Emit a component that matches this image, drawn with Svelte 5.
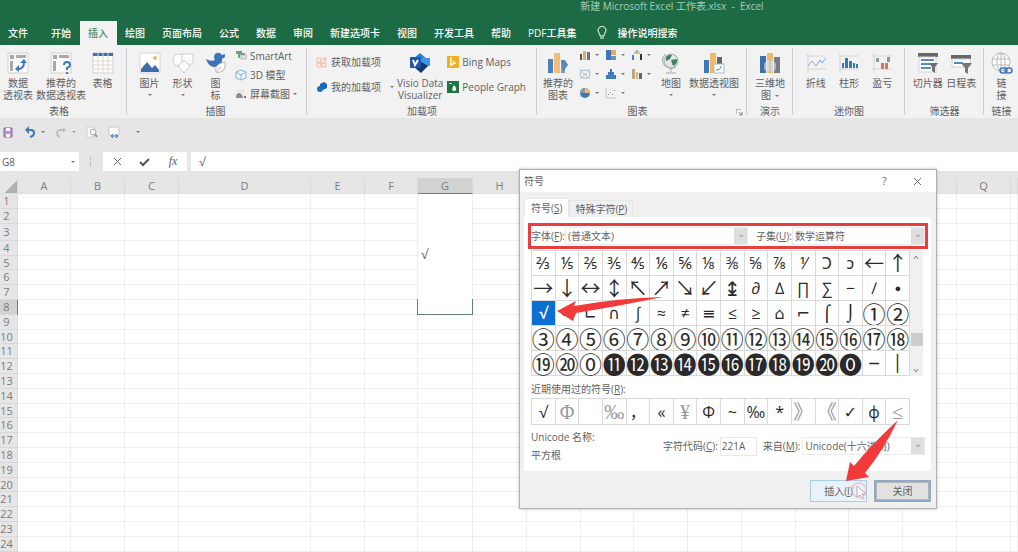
<script lang="ts">
  type Symbol = { char: string; kind?: string };

  const tabs = ['文件', '开始', '插入', '绘图', '页面布局', '公式', '数据', '审阅', '新建选项卡', '视图', '开发工具', '帮助', 'PDF工具集'];
  let activeTab = $state('插入');

  // Column letters with their widths, the last one takes what is left
  const columns = [
    { name: 'A', width: 53 }, { name: 'B', width: 54 }, { name: 'C', width: 54 },
    { name: 'D', width: 132 }, { name: 'E', width: 54 }, { name: 'F', width: 53 },
    { name: 'G', width: 55 }, { name: 'H', width: 54 }, { name: 'I', width: 54 },
    { name: 'J', width: 53 }, { name: 'K', width: 54 }, { name: 'L', width: 54 },
    { name: 'M', width: 54 }, { name: 'N', width: 53 }, { name: 'O', width: 54 },
    { name: 'P', width: 54 }, { name: 'Q', width: 54 }, { name: '', width: 0 },
  ];
  const rows = Array.from({ length: 24 }, (_, i) => i + 1);
  const mergedRows = 8; // G1:G8 is one merged cell

  const symbols: Symbol[] = [
    ...'⅔⅕⅖⅗⅘⅙⅚⅛⅜⅝⅞⅟Ↄↄ'.split('').map((char) => ({ char })),
    ...'←↑→↓↔↕↖↗↘↙↨'.split('').map((char) => ({ char, kind: 'arrow' })),
    ...'∂∆∏∑−∕∙'.split('').map((char) => ({ char })),
    ...'√∞∟∩∫≈≠≡≤≥⌂⌐⌠⌡'.split('').map((char) => ({ char })),
    ...'①②③④⑤⑥⑦⑧⑨⑩⑪⑫⑬⑭⑮⑯⑰⑱⑲⑳⓪⓫⓬⓭⓮⓯⓰⓱⓲⓳⓴⓿'.split('').map((char) => ({ char, kind: 'circled' })),
    { char: '─' },
    { char: '│' },
  ];
  let selected = $state('√');

  const recent: Symbol[] = [
    { char: '√' }, { char: 'Φ', kind: 'serif' }, { char: ' ' }, { char: '‰', kind: 'serif' },
    { char: '，' }, { char: '«' }, { char: '¥', kind: 'serif' }, { char: 'Φ' },
    { char: '~' }, { char: '‰' }, { char: '*' }, { char: '》', kind: 'serif' },
    { char: '《', kind: 'serif' }, { char: '✓' }, { char: 'ф' }, { char: '≤', kind: 'serif' },
  ];

  const smallCharts = ['column', 'tree', 'waterfall', 'radar', 'histogram', 'combo', 'pie', 'scatter'];
</script>

{#snippet icon(name: string)}
  {#if name === 'pivot' || name === 'pivotHelp'}
    <svg class="icon" viewBox="0 0 22 22">
      <rect x="1" y="1" width="20" height="20" fill="#fafafa" stroke="#d2d2d2" />
      <path d="M3 3h4v4H3zM9 3h10v3H9zM3 9h3v10H3z" fill="#a8a8a8" />
      {#if name === 'pivot'}
        <path d="M11 17q6 0 6-7" fill="none" stroke="#3d78bd" stroke-width="2" />
        <path d="M8 17l4-4v7zM17 7l-4 4h7z" fill="#3d78bd" />
      {:else}
        <path d="M14 13q0-3 3-3t3 3q0 2-3 3v2" fill="none" stroke="#3d78bd" stroke-width="2" />
        <rect x="16" y="20" width="2" height="2" fill="#3d78bd" />
      {/if}
    </svg>
  {:else if name === 'table'}
    <svg class="icon" viewBox="0 0 22 22">
      <rect x="1" y="1" width="20" height="20" fill="#fff" stroke="#d0d0d0" />
      <rect x="1" y="1" width="20" height="3" fill="#3b6fb0" />
      <path d="M6 1v20M11 1v20M16 1v20M1 9h20M1 13h20M1 17h20" stroke="#e3d6cd" />
    </svg>
  {:else if name === 'picture'}
    <svg class="icon" viewBox="0 0 22 22">
      <rect x="1" y="1" width="20" height="20" fill="#fff" stroke="#d6d6d6" />
      <circle cx="16" cy="6" r="2" fill="#efb75b" />
      <path d="M2 20v-3l6-7 5 6 3-3 4 5v2z" fill="#3d6eab" />
    </svg>
  {:else if name === 'shapes'}
    <svg class="icon" viewBox="0 0 22 22" fill="#fff" stroke="#c8ccd3">
      <circle cx="7" cy="8" r="6" />
      <rect x="10" y="2" width="11" height="10" />
      <path d="M12 8l6 6-6 7-6-7z" />
    </svg>
  {:else if name === 'duck'}
    <svg class="icon" viewBox="0 0 22 22">
      <path d="M1 7q5 3 9 1-2-3 0-6 4-3 7 1l3-1v3l-3 2q1 8-8 8Q3 14 1 7z" fill="#3b75b5" />
      <path d="M11 20q-2-8 9-10 1 9-5 10-3 1-4 0l5-5" fill="#fff" stroke="#b9b4ae" />
    </svg>
  {:else if name === 'smartart'}
    <svg class="icon mini" viewBox="0 0 12 12">
      <path d="M1 1h6v2h3v2H5v3H3V4H1z" fill="#6fa08a" />
      <rect x="6" y="5" width="5" height="4" fill="#dfe5e2" stroke="#b5b5b5" />
    </svg>
  {:else if name === 'cube'}
    <svg class="icon mini" viewBox="0 0 12 12" fill="#eef5fc" stroke="#83b2e0">
      <path d="M6 1l5 2v6l-5 2-5-2V3zM1 3l5 3 5-3M6 6v5" />
    </svg>
  {:else if name === 'screenshot'}
    <svg class="icon mini" viewBox="0 0 12 12">
      <path d="M1 10q0-5 3-5t4 5z" fill="#8c8c8c" />
      <path d="M1 3h8v2" fill="none" stroke="#ddd" />
      <rect x="9" y="8" width="2" height="2" fill="#777" />
    </svg>
  {:else if name === 'store'}
    <svg class="icon mini" viewBox="0 0 12 12" fill="#fdf1ec" stroke="#efb7a3">
      <path d="M1 2h4v4H1zM1 7h4v4H1zM6 7h4v4H6zM9 1v5M6 3h5" />
    </svg>
  {:else if name === 'myaddin'}
    <svg class="icon mini" viewBox="0 0 12 12">
      <path d="M4 3l4-2 3 2v4L7 9 4 7z" fill="#1668b9" />
      <circle cx="4" cy="8" r="3" fill="#1d70c0" />
    </svg>
  {:else if name === 'visio'}
    <svg class="icon" viewBox="0 0 22 22">
      <path d="M11 1l7 6-7 6-7-6z" fill="#2a82d8" />
      <path d="M12 6h9v8h-9z" fill="#3f97e8" />
      <path d="M11 9l8 5-7 7-7-6z" fill="#16366f" />
      <rect x="1" y="5" width="11" height="11" rx="1" fill="#1d56ad" />
      <path d="M4 8l2 5 3-5" fill="none" stroke="#fff" stroke-width="2" />
    </svg>
  {:else if name === 'bing'}
    <svg class="icon mini" viewBox="0 0 12 12">
      <rect width="12" height="12" fill="#f2b01c" />
      <path d="M4 1v8l4-2-2-2" fill="none" stroke="#fff" stroke-width="1.5" />
    </svg>
  {:else if name === 'people'}
    <svg class="icon mini" viewBox="0 0 12 12">
      <rect width="12" height="12" fill="#1f7349" />
      <path d="M6 10q-2-2 1-6 4 4 1 6zM2 2h3v1H2z" fill="#e8f3ed" />
    </svg>
  {:else if name === 'recommended'}
    <svg class="icon" viewBox="0 0 22 22">
      <rect x="1" y="7" width="5" height="14" fill="#4d82bd" />
      <rect x="7" y="1" width="6" height="20" fill="#efbf78" />
      <rect x="14" y="9" width="4" height="12" fill="#8d9bad" />
      <path d="M14 8h4l3 5-5 7z" fill="#5989bd" />
    </svg>
  {:else if name === 'column'}
    <svg class="icon mini" viewBox="0 0 12 12">
      <path d="M1 5h2v6H1z" fill="#555" /><path d="M4 2h3v9H4z" fill="#e0ac62" /><path d="M8 3h3v8H8z" fill="#77716a" />
    </svg>
  {:else if name === 'tree'}
    <svg class="icon mini" viewBox="0 0 12 12">
      <path d="M1 1h5v10H1z" fill="#3a76b8" /><path d="M6 1h5v5H6z" fill="#e5ac5d" /><path d="M6 7h5v4H6z" fill="#6d93bd" />
    </svg>
  {:else if name === 'waterfall'}
    <svg class="icon mini" viewBox="0 0 12 12">
      <path d="M1 6h2v5H1z" fill="#4d82bd" /><path d="M3 5l3-4 3 4" fill="none" stroke="#999" /><path d="M5 2h2v3H5z" fill="#e5ac5d" /><path d="M9 5h2v6H9z" fill="#333" />
    </svg>
  {:else if name === 'radar'}
    <svg class="icon mini" viewBox="0 0 12 12" fill="none" stroke="#9db4ce">
      <path d="M2 3l4-1 4 1 1 4-3 3H4L1 7zM1 1l2 2M11 1L9 3M1 11l2-2M11 11L9 9M4 5l4 3M8 5L4 8" />
    </svg>
  {:else if name === 'histogram'}
    <svg class="icon mini" viewBox="0 0 12 12">
      <path d="M1 7h2V4h2V1h2v3h2v3h2v4H1z" fill="#4279b7" />
    </svg>
  {:else if name === 'combo'}
    <svg class="icon mini" viewBox="0 0 12 12">
      <path d="M1 1h3v10H1z" fill="#b6a58b" /><path d="M5 4h2v7H5z" fill="#e3b06b" /><path d="M8 5h3v6H8z" fill="#6d665f" />
    </svg>
  {:else if name === 'pie'}
    <svg class="icon mini" viewBox="0 0 12 12">
      <circle cx="6" cy="6" r="5" fill="#3d78b9" /><path d="M6 6V1a5 5 0 0 0-5 5z" fill="#8b99a9" /><path d="M6 6V1a5 5 0 0 1 5 5z" fill="#edbd6c" />
    </svg>
  {:else if name === 'scatter'}
    <svg class="icon mini" viewBox="0 0 12 12">
      <path d="M1 1v10h10" fill="none" stroke="#c4c4c4" /><path d="M3 7h1v1H3zM5 5h1v1H5zM7 7h1v1H7zM9 3h1v1H9z" fill="#888" />
    </svg>
  {:else if name === 'globe'}
    <svg class="icon" viewBox="0 0 22 22">
      <circle cx="11" cy="9" r="7" fill="#dfe8e4" stroke="#9eaaa5" />
      <path d="M6 5q3-3 6-2l-2 4-4 2zM11 8l6-1q1 5-4 7z" fill="#3d8062" />
      <path d="M5 2Q0 9 5 14q6 4 11 1M11 17v3M6 21h10" fill="none" stroke="#a5a5a5" />
    </svg>
  {:else if name === 'pivotChart'}
    <svg class="icon" viewBox="0 0 22 22">
      <rect x="1" y="8" width="5" height="13" fill="#3d78b9" />
      <rect x="7" y="1" width="6" height="20" fill="#efb968" />
      <rect x="14" y="5" width="5" height="9" fill="#666" />
      <rect x="11" y="12" width="10" height="9" fill="#fff" stroke="#b0b8c2" />
      <path d="M13 18q5 0 5-4" fill="none" stroke="#4d82bd" />
    </svg>
  {:else if name === 'map3d'}
    <svg class="icon" viewBox="0 0 22 22">
      <rect x="1" y="4" width="6" height="17" fill="#3a71b0" />
      <rect x="8" y="1" width="6" height="20" fill="#edb968" />
      <rect x="15" y="5" width="6" height="16" fill="#777d84" />
      <circle cx="11" cy="14" r="6" fill="#dfe5ee" opacity="0.7" />
      <path d="M6 11v8M11 8v12M16 11v8" stroke="#a8b3c2" />
    </svg>
  {:else if name === 'line'}
    <svg class="icon" viewBox="0 0 22 22">
      <path d="M3 1v20M1 4h20M1 17h20" stroke="#d5d5d5" /><path d="M3 14l4-5 4 5 4-6 2 3 4-5" fill="none" stroke="#86a9cf" />
    </svg>
  {:else if name === 'bars'}
    <svg class="icon" viewBox="0 0 22 22">
      <path d="M2 2v19M1 4h20M1 17h20" stroke="#d5d5d5" /><path d="M4 11h2v5H4zM7 6h3v10H7zM11 9h3v7h-3zM15 11h2v5h-2zM18 12h2v4h-2z" fill="#3a76b4" />
    </svg>
  {:else if name === 'winloss'}
    <svg class="icon" viewBox="0 0 22 22">
      <path d="M3 1v20M1 4h20M1 17h20" stroke="#d5d5d5" /><path d="M5 6h3v4H5zM16 5h3v5h-3z" fill="#8b9a96" /><path d="M10 11h3v6h-3zM14 11h3v6h-3z" fill="#dd7264" />
    </svg>
  {:else if name === 'slicer'}
    <svg class="icon" viewBox="0 0 22 22">
      <rect x="1" y="1" width="20" height="4" fill="#666" />
      <rect x="2" y="5" width="17" height="15" fill="#fff" stroke="#cdd5df" />
      <path d="M4 8h13M4 12h10M4 16h10" stroke="#5b8ac2" stroke-width="2" />
      <path d="M12 11h9l-3 4v6l-3-2v-4z" fill="#707070" />
    </svg>
  {:else if name === 'timeline'}
    <svg class="icon" viewBox="0 0 22 22">
      <rect x="1" y="3" width="20" height="4" fill="#666" />
      <rect x="2" y="7" width="18" height="8" fill="#fff" stroke="#d0d0d0" />
      <path d="M4 11h9" stroke="#4d8ac2" stroke-width="2" />
      <path d="M11 11h11l-4 5v6l-3-2v-4z" fill="#777" />
    </svg>
  {:else if name === 'link'}
    <svg class="icon" viewBox="0 0 22 22" fill="none">
      <g stroke="#b9b9b9"><circle cx="10" cy="10" r="9" fill="#fff" /><ellipse cx="10" cy="10" rx="4" ry="9" /><path d="M1 7h18M1 13h18M10 1v18" /></g>
      <g stroke="#3f79b7" stroke-width="1.5"><rect x="9" y="16" width="7" height="5" rx="2.5" /><rect x="14" y="16" width="7" height="5" rx="2.5" /></g>
    </svg>
  {/if}
{/snippet}

{#snippet bigButton(name: string, lines: string[], caret: boolean = false)}
  <button class="big">
    {@render icon(name)}
    {#each lines as line, i}
      <span>{line}{#if caret && i > 0}<i class="caret inline"></i>{/if}</span>
    {/each}
    {#if caret && lines.length === 1}<i class="caret"></i>{/if}
  </button>
{/snippet}

<div class="app">
  <header>
    <div class="title">新建 Microsoft Excel 工作表.xlsx &nbsp;-&nbsp; Excel</div>
    <nav>
      {#each tabs as tab}
        <button class:active={tab === activeTab} onclick={() => (activeTab = tab)}>{tab}</button>
      {/each}
      <button class="tell">
        <svg width="10" height="14" viewBox="0 0 10 14" fill="none" stroke="#fff">
          <path d="M3 10Q3 8 2 7a4 4 0 1 1 6 0Q7 8 7 10zM3 12h4" />
        </svg>
        操作说明搜索
      </button>
    </nav>
  </header>

  <div class="ribbon">
    <section class="g-tables">
      <div class="tools">
        {@render bigButton('pivot', ['数据', '透视表'])}
        {@render bigButton('pivotHelp', ['推荐的', '数据透视表'])}
        {@render bigButton('table', ['表格'])}
      </div>
      <h2>表格</h2>
    </section>
    <section class="g-illustrations">
      <div class="tools">
        {@render bigButton('picture', ['图片'], true)}
        {@render bigButton('shapes', ['形状'], true)}
        {@render bigButton('duck', ['图', '标'])}
        <div class="list three">
          <button>{@render icon('smartart')}SmartArt</button>
          <button>{@render icon('cube')}3D 模型</button>
          <button>{@render icon('screenshot')}屏幕截图<i class="caret"></i></button>
        </div>
      </div>
      <h2>插图</h2>
    </section>
    <section class="g-addins">
      <div class="tools">
        <div class="list">
          <button>{@render icon('store')}获取加载项</button>
          <button>{@render icon('myaddin')}我的加载项<i class="caret far"></i></button>
        </div>
        {@render bigButton('visio', ['Visio Data', 'Visualizer'])}
        <div class="list">
          <button>{@render icon('bing')}Bing Maps</button>
          <button>{@render icon('people')}People Graph</button>
        </div>
      </div>
      <h2>加载项</h2>
    </section>
    <section class="g-charts">
      <div class="tools">
        {@render bigButton('recommended', ['推荐的', '图表'])}
        <div class="charts">
          {#each smallCharts as chart}
            <button aria-label={chart}>{@render icon(chart)}<i class="caret inline"></i></button>
          {/each}
        </div>
        {@render bigButton('globe', ['地图'], true)}
        {@render bigButton('pivotChart', ['数据透视图'], true)}
      </div>
      <h2>图表</h2>
      <svg class="launcher" width="7" height="7" viewBox="0 0 7 7" fill="none" stroke="#888"><path d="M0 5V0h5M3 3l3 3M6 3v3H3" /></svg>
    </section>
    <section class="g-tour">
      <div class="tools">{@render bigButton('map3d', ['三维地', '图'], true)}</div>
      <h2>演示</h2>
    </section>
    <section class="g-spark">
      <div class="tools">
        {@render bigButton('line', ['折线'])}
        {@render bigButton('bars', ['柱形'])}
        {@render bigButton('winloss', ['盈亏'])}
      </div>
      <h2>迷你图</h2>
    </section>
    <section class="g-filter">
      <div class="tools">
        {@render bigButton('slicer', ['切片器'])}
        {@render bigButton('timeline', ['日程表'])}
      </div>
      <h2>筛选器</h2>
    </section>
    <section class="g-link">
      <div class="tools">{@render bigButton('link', ['链', '接'])}</div>
      <h2>链接</h2>
    </section>
  </div>

  <div class="quick">
    <button aria-label="保存">
      <svg width="12" height="12" viewBox="0 0 12 12"><path d="M2 2h8v9H2z" fill="#b797cb" stroke="#8f62ab" /><path d="M4 2h4v3H4zM4 8h4v3H4z" fill="#fff" /></svg>
    </button>
    <button aria-label="撤消">
      <svg width="12" height="12" viewBox="0 0 12 12"><path d="M3 4h4q3 0 3 3t-4 4" fill="none" stroke="#3f78b5" stroke-width="2" /><path d="M1 4l4-4v8z" fill="#3f78b5" /></svg>
      <i class="caret"></i>
    </button>
    <button class="off" aria-label="恢复">
      <svg width="12" height="12" viewBox="0 0 12 12"><path d="M9 4H6Q2 4 2 7t3 4" fill="none" stroke="#b0b0b0" stroke-width="2" /><path d="M11 4L8 1v6z" fill="#b0b0b0" /></svg>
      <i class="caret"></i>
    </button>
    <button aria-label="打印预览">
      <svg width="12" height="12" viewBox="0 0 12 12" fill="none"><path d="M1 1h7v10H1z" fill="#fff" stroke="#ccc" /><circle cx="7" cy="6" r="3" fill="#f4f4f4" stroke="#aaa" /><path d="M9 8l2 3" stroke="#999" stroke-width="2" /></svg>
    </button>
    <button aria-label="列宽">
      <svg width="12" height="12" viewBox="0 0 12 12"><path d="M1 1h10v8H1z" fill="#fff" stroke="#c8c8c8" /><path d="M3 10h7M5 8l-2 2 2 2M8 8l2 2-2 2" fill="none" stroke="#3d75b3" /></svg>
    </button>
    <button aria-label="自定义"><i class="caret"></i></button>
  </div>

  <div class="formula">
    <div class="name">
      <input aria-label="名称框" value="G8" />
      <i class="caret"></i>
    </div>
    <span class="grip"></span>
    <div class="edit">
      <button aria-label="取消"><svg width="9" height="9" viewBox="0 0 9 9"><path d="M1 1l7 7M8 1L1 8" stroke="#666" /></svg></button>
      <button aria-label="输入"><svg width="12" height="10" viewBox="0 0 12 10"><path d="M1 5l3 3 6-6" fill="none" stroke="#555" stroke-width="2" /></svg></button>
      <button class="fx">fx</button>
    </div>
    <input class="value" aria-label="编辑栏" value="√" />
  </div>

  <div class="sheet">
    <table>
      <colgroup>
        <col class="numbers" />
        {#each columns as column}
          <col style:width={column.width ? `${column.width}px` : 'auto'} />
        {/each}
      </colgroup>
      <thead>
        <tr>
          <th class="corner"></th>
          {#each columns as column}
            <th class:current={column.name === 'G'}>{column.name}</th>
          {/each}
        </tr>
      </thead>
      <tbody>
        {#each rows as row}
          <tr class:tall={row === 3}>
            <th class:current={row === 8}>{row}</th>
            {#each columns as column}
              {#if column.name !== 'G' || row > mergedRows}
                <td></td>
              {:else if row === 1}
                <td class="merged" rowspan={mergedRows}>√</td>
              {/if}
            {/each}
          </tr>
        {/each}
      </tbody>
    </table>
  </div>

  <div class="dialog" role="dialog" aria-labelledby="dialog-title">
    <div class="caption">
      <h1 id="dialog-title">符号</h1>
      <button>?</button>
      <button aria-label="关闭窗口"><svg width="9" height="9" viewBox="0 0 9 9"><path d="M1 1l7 7M8 1L1 8" stroke="#666" /></svg></button>
    </div>
    <div class="tabs" role="tablist">
      <button class="on" role="tab" aria-selected="true">符号(<u>S</u>)</button>
      <button role="tab" aria-selected="false">特殊字符(<u>P</u>)</button>
    </div>
    <div class="panel">
      <div class="marked">
        <label for="font">字体(<u>F</u>):</label>
        <div class="select wide">
          <select id="font"><option>(普通文本)</option></select>
        </div>
        <label for="subset">子集(<u>U</u>):</label>
        <div class="select">
          <select id="subset"><option>数学运算符</option></select>
        </div>
      </div>

      <div class="picker">
        <div class="symbols">
          {#each symbols as symbol}
            <button class={symbol.kind} class:selected={symbol.char === selected} onclick={() => (selected = symbol.char)}>{symbol.char}</button>
          {/each}
        </div>
        <div class="scroll">
          <svg width="7" height="5" viewBox="0 0 7 5"><path d="M1 4l2-3 2 3" fill="none" stroke="#888" /></svg>
          <span></span>
          <svg width="7" height="5" viewBox="0 0 7 5"><path d="M1 1l2 3 2-3" fill="none" stroke="#888" /></svg>
        </div>
      </div>

      <p class="recent-label">近期使用过的符号(<u>R</u>):</p>
      <div class="symbols recent">
        {#each recent as symbol}
          <button class={symbol.kind}>{symbol.char}</button>
        {/each}
      </div>

      <div class="details">
        <div class="unicode">
          <p>Unicode 名称:</p>
          <p>平方根</p>
        </div>
        <label for="code">字符代码(<u>C</u>):</label>
        <input id="code" value="221A" />
        <label for="from">来自(<u>M</u>):</label>
        <div class="select">
          <select id="from"><option>Unicode(十六进制)</option></select>
        </div>
      </div>
    </div>
    <div class="actions">
      <button class="insert">插入(<u>I</u>)</button>
      <button class="close">关闭</button>
    </div>

    <svg class="arrows" width="418" height="340" viewBox="0 0 418 340">
      <path d="M38 142L57 132L55 137Q100 129 144 128Q100 137 57 144L54 152z" fill="#f23a3a" />
      <path d="M379 251Q364 282 346 304L350 308L327 312L331 293L335 297Q352 276 379 251z" fill="#f23a3a" />
      <circle cx="340" cy="321" r="7" fill="none" stroke="#e7a9b5" stroke-width="2" opacity="0.5" />
      <path d="M338 317v11l3-2 2 4 2-1-2-4h4z" fill="#fff" stroke="#c2a4b4" />
    </svg>
  </div>
</div>

<style>
  :global(body) {
    margin: 0;
    background: #fff;
  }

  .app {
    position: relative;
    display: flex;
    flex-direction: column;
    height: 100vh;
    overflow: hidden;
    font-family: "Open Sans", "Noto Sans CJK SC", sans-serif;
    font-size: 10px;
    line-height: 12px;
    color: #5f5f5f;
  }

  button, input, select {
    box-sizing: border-box;
    margin: 0;
    padding: 0;
    border: 0;
    background: none;
    font: inherit;
    color: inherit;
  }

  h1, h2, p {
    margin: 0;
    font-size: 10px;
    font-weight: 400;
  }

  svg {
    flex: none;
    display: block;
  }

  /* Title and ribbon tabs */
  header {
    background: #1d6b45;
    color: #fff;
  }

  .title {
    height: 21px;
    margin-left: 57%;
    white-space: nowrap;
    color: #a9ccb9;
  }

  nav {
    display: flex;
    height: 24px;
  }

  nav button {
    padding: 0 9px 0 8px;
    font-weight: 500;
    white-space: nowrap;
  }

  nav button:first-child {
    margin-right: 6px;
  }

  nav .active {
    background: #f3f3f3;
    color: #4d8a6a;
  }

  nav .tell {
    display: flex;
    align-items: center;
    gap: 10px;
    margin-left: 4px;
  }

  /* Ribbon */
  .ribbon {
    display: flex;
    height: 73px;
    background: #f2f2f2;
  }

  section {
    position: relative;
    box-sizing: border-box;
    flex: none;
    display: flex;
    flex-direction: column;
    background: linear-gradient(#cfcfcf, #cfcfcf) right 3px / 1px 67px no-repeat;
  }

  section h2 {
    text-align: center;
  }

  .g-tables { width: 127px; }
  .g-illustrations { width: 180px; padding-left: 6px; }
  .g-addins { width: 230px; padding-left: 9px; }
  .g-charts { width: 210px; }
  .g-tour { width: 46px; }
  .g-spark { width: 112px; padding: 0 6px; }
  .g-filter { width: 79px; padding: 0 6px; }
  .g-link { flex: 1 0 35px; background: none; }

  .g-tables h2, .g-illustrations h2, .g-addins h2, .g-charts h2 {
    padding-right: 9px;
  }

  .tools {
    display: flex;
    height: 60px;
  }

  .g-spark .tools, .g-filter .tools, .g-tour .tools, .g-link .tools {
    justify-content: space-around;
  }

  .big {
    flex: none;
    display: flex;
    flex-direction: column;
    align-items: center;
    min-width: 33px;
    padding-top: 7px;
    white-space: nowrap;
  }

  .g-tables .big:first-child {
    width: 36px;
  }

  .big .icon {
    margin-bottom: 3px;
  }

  .icon {
    width: 22px;
    height: 22px;
  }

  .mini {
    width: 12px;
    height: 12px;
  }

  .caret {
    display: block;
    width: 0;
    border: 2px solid transparent;
    border-top-color: #777;
    border-bottom: 0;
  }

  .big > .caret {
    margin-top: 5px;
  }

  .caret.inline {
    display: inline-block;
    margin-left: 4px;
    vertical-align: middle;
  }

  .caret.far {
    margin-left: 6px;
  }

  .list {
    display: flex;
    flex-direction: column;
    padding-top: 4px;
  }

  .list button {
    display: flex;
    align-items: center;
    gap: 3px;
    height: 25px;
    white-space: nowrap;
  }

  .list.three {
    padding: 1px 0 0 3px;
  }

  .list.three button {
    height: 19px;
  }

  .g-addins .big {
    margin: 0 4px 0 3px;
  }

  .g-charts .big:first-child {
    width: 42px;
  }

  .g-charts .big:nth-child(3) {
    width: 28px;
    min-width: 0;
  }

  .g-charts .big:last-child {
    width: 58px;
  }

  .charts {
    display: grid;
    grid-template-columns: repeat(3, 26px);
    grid-auto-rows: 19px;
  }

  .charts button {
    display: flex;
    align-items: center;
  }

  .launcher {
    position: absolute;
    right: 4px;
    bottom: 2px;
  }

  /* Quick access bar */
  .quick {
    display: flex;
    align-items: center;
    gap: 10px;
    height: 22px;
    padding: 3px 2px 9px;
    background: #e6e6e6;
  }

  .quick button {
    display: flex;
    align-items: center;
    gap: 5px;
  }

  .quick button:nth-child(5) {
    margin-right: 6px;
  }

  .off {
    opacity: 0.7;
  }

  /* Formula bar */
  .formula {
    display: flex;
    height: 19px;
    padding-bottom: 7px;
    background: #e6e6e6;
  }

  .name {
    display: flex;
    align-items: center;
    width: 79px;
    background: #fff;
  }

  .name input {
    flex: 1;
    min-width: 0;
    padding-left: 2px;
  }

  .name .caret {
    margin-right: 4px;
  }

  .grip {
    width: 1px;
    height: 9px;
    margin: 5px 11px;
    border-left: 1px dotted #999;
  }

  .edit {
    display: flex;
    width: 84px;
    margin-right: 4px;
    background: #fff;
  }

  .edit button {
    flex: 1;
    display: flex;
    align-items: center;
    justify-content: center;
  }

  .edit .fx {
    font: italic 12px "Liberation Serif", serif;
  }

  .value {
    flex: 1;
    min-width: 0;
    padding-left: 8px;
    background: #fff;
    font-size: 12px;
  }

  /* Cells */
  .sheet {
    flex: 1;
    min-height: 0;
    overflow: hidden;
  }

  table {
    width: 100%;
    table-layout: fixed;
    border-collapse: separate;
    border-spacing: 0;
  }

  .numbers {
    width: 18px;
  }

  th, td {
    box-sizing: border-box;
    height: 15px;
    padding: 0;
    border-right: 1px solid #efefef;
    border-bottom: 1px solid #efefef;
    line-height: 12px;
  }

  th {
    background: #e6e6e6;
    border-color: #d9d9d9;
    font-size: 11px;
    font-weight: 400;
    color: #7c7c7c;
  }

  thead th {
    height: 16px;
    border-bottom-color: #e0e0e0;
  }

  tbody th {
    padding-right: 4px;
  }

  tbody tr:nth-child(5n) > *, tbody tr:first-child > th {
    height: 14px;
  }

  .tall > * {
    height: 17px;
  }

  .corner {
    background: linear-gradient(135deg, #e6e6e6 60%, #b0b0b0 60%);
  }

  .current {
    background: #d2d2d2;
  }

  thead .current {
    border-bottom-color: #5d8a76;
  }

  tbody .current {
    border-right-color: #5d8a76;
  }

  .merged {
    position: relative;
    padding-left: 3px;
    font-size: 13px;
  }

  .merged::after {
    content: "";
    position: absolute;
    inset: auto -1px -1px -1px;
    height: 15px;
    border: 1px solid #5f8274;
    border-top: 0;
  }

  /* Symbol dialog */
  .dialog {
    position: absolute;
    left: 519px;
    top: 169px;
    box-sizing: border-box;
    width: 418px;
    border: 1px solid #b2b2b2;
    background: #f0f0f0;
    box-shadow: 0 0 3px #bbb;
  }

  .caption {
    display: flex;
    align-items: center;
    height: 22px;
    padding: 0 4px;
    background: #fff;
  }

  .caption h1 {
    flex: 1;
  }

  .caption button {
    display: flex;
    justify-content: center;
    width: 37px;
  }

  .caption button:last-child {
    width: 29px;
  }

  .tabs {
    display: flex;
    align-items: flex-end;
    height: 25px;
    padding-left: 4px;
  }

  .tabs button {
    height: 17px;
    padding: 0 5px;
    border: 1px solid #e6e6e6;
    border-bottom: 0;
  }

  .tabs .on {
    height: 19px;
    padding: 0 6px;
    background: #fff;
  }

  .panel {
    margin: 0 5px 0 4px;
    padding: 6px 3px 10px 7px;
    background: #fff;
  }

  .marked {
    display: flex;
    align-items: center;
    height: 20px;
    margin-left: -3px;
    border: 3px solid #e83e3e;
  }

  .marked label {
    width: 34px;
    white-space: nowrap;
  }

  .marked label:nth-of-type(2) {
    margin-left: 8px;
    width: 36px;
  }

  .select {
    position: relative;
    box-sizing: border-box;
    flex: 1;
    height: 18px;
    border: 1px solid #ececec;
  }

  .select.wide {
    flex: none;
    width: 183px;
  }

  .select::after {
    content: "⌄";
    position: absolute;
    inset: 0 0 0 auto;
    width: 13px;
    background: #dedede;
    text-align: center;
    line-height: 11px;
    color: #999;
    pointer-events: none;
  }

  select {
    width: 100%;
    height: 100%;
    padding: 0 16px 0 2px;
    appearance: none;
  }

  .picker {
    display: flex;
    margin-top: 1px;
  }

  .symbols {
    box-sizing: border-box;
    flex: none;
    display: grid;
    grid-template-columns: repeat(16, 1fr);
    grid-auto-rows: 25px;
    width: 379px;
    border: solid #d9d9d9;
    border-width: 0 0 1px 1px;
  }

  .symbols button {
    display: flex;
    align-items: center;
    justify-content: center;
    min-width: 0;
    border: solid #d9d9d9;
    border-width: 1px 1px 0 0;
    font-family: "Open Sans", "Noto Sans", "DejaVu Sans", "Noto Sans CJK SC", sans-serif;
    font-size: 16px;
    line-height: 24px;
    color: #2a2a2a;
  }

  .symbols .arrow {
    font-family: "Noto Sans CJK SC", "DejaVu Sans", sans-serif;
    font-size: 20px;
  }

  .symbols .circled {
    font-family: "Noto Sans CJK SC", "DejaVu Sans", sans-serif;
    font-size: 23px;
  }

  .symbols .serif {
    font-family: "Liberation Serif", "Noto Sans CJK SC", serif;
    font-size: 20px;
    color: #999;
  }

  .symbols .selected {
    background: #0a6fd2;
    font-weight: 600;
    color: #fff;
  }

  .recent {
    grid-auto-rows: 26px;
  }

  .scroll {
    box-sizing: border-box;
    display: flex;
    flex-direction: column;
    align-items: center;
    justify-content: space-between;
    width: 13px;
    padding: 5px 0 3px;
    background: #f0f0f0;
  }

  .scroll span {
    width: 12px;
    height: 13px;
    margin-top: 50px;
    background: #cdcdcd;
  }

  .recent-label {
    margin: 7px 0 3px;
  }

  .details {
    display: flex;
    align-items: center;
    gap: 2px;
    margin: 6px 3px 0 0;
  }

  .unicode {
    width: 130px;
  }

  .unicode p:last-child {
    margin-top: 6px;
  }

  #code {
    width: 37px;
    height: 19px;
    margin-right: 4px;
    padding-left: 1px;
    border: 1px solid #e8e8e8;
  }

  .actions {
    display: flex;
    justify-content: flex-end;
    gap: 7px;
    padding: 9px 5px 6px;
  }

  .actions button {
    width: 57px;
    height: 22px;
    border: 1px solid #a9cdec;
    background: #e8f2fb;
  }

  .actions .close {
    border: 2px solid #8fa9c9;
    background: #e1e1e1;
    box-shadow: inset 0 0 0 1px #b5b5b5;
  }

  /* Pointers drawn over the dialog */
  .arrows {
    position: absolute;
    left: -1px;
    top: -1px;
    pointer-events: none;
  }
</style>
